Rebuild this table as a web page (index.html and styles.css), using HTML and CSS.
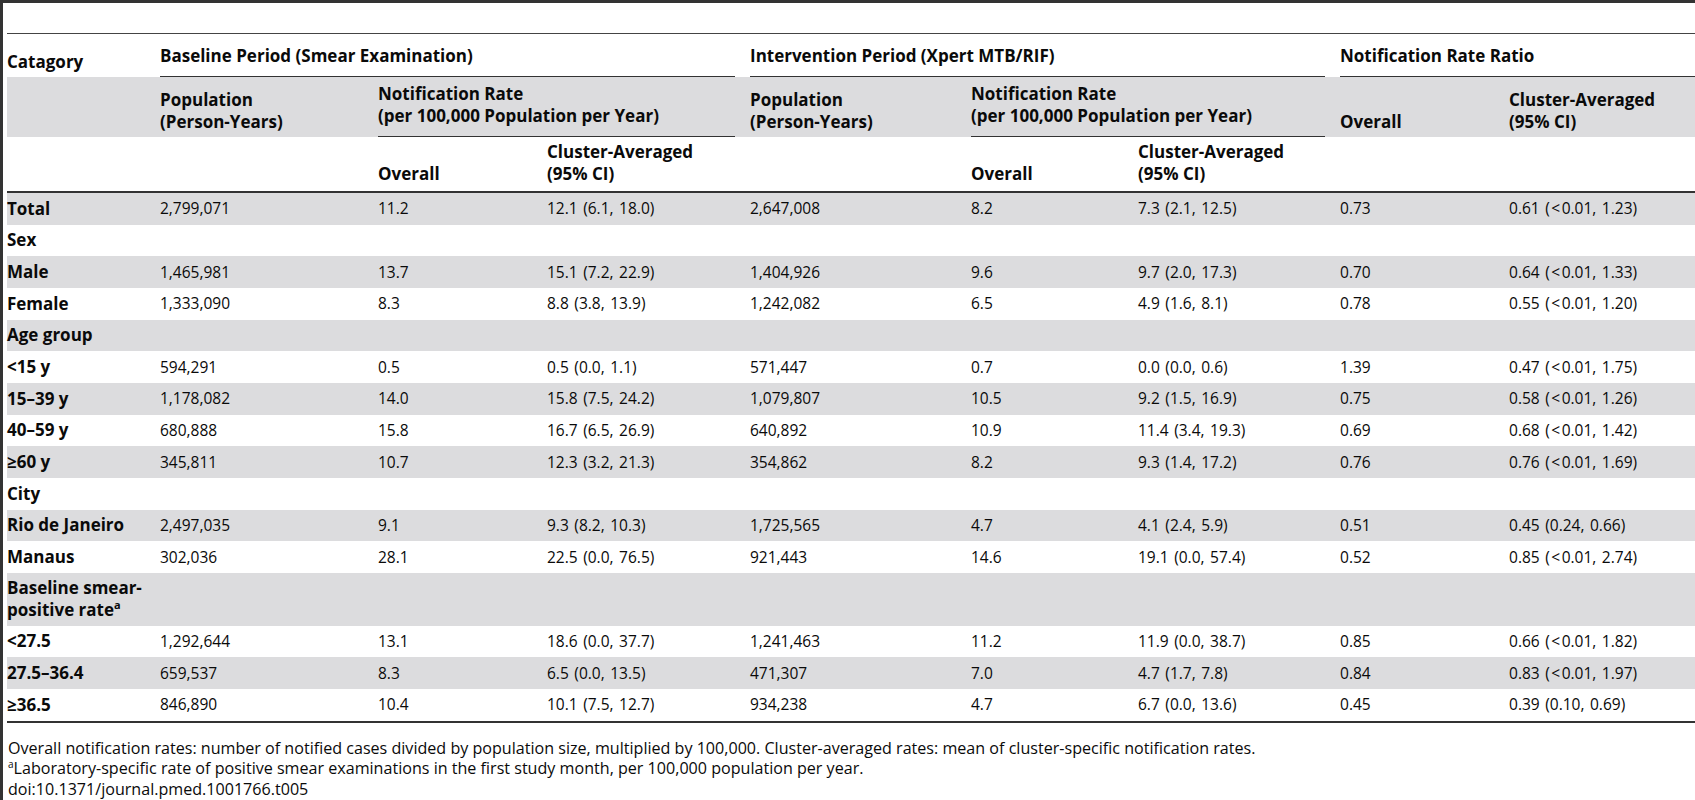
FILE: index.html
```html
<!DOCTYPE html>
<html lang="en">
<head>
<meta charset="utf-8">
<title>Table 5</title>
<link rel="stylesheet" href="styles.css">
</head>
<body>
<div class="page">
<table class="tbl">
  <colgroup>
    <col class="c1"><col class="c2"><col class="c3"><col class="c4"><col class="c5"><col class="c6"><col class="c7"><col class="c8"><col class="c9">
  </colgroup>
  <thead>
    <tr class="h1">
      <th class="cat">Catagory</th>
      <th colspan="3" class="ul gap">Baseline Period (Smear Examination)</th>
      <th colspan="3" class="ul gap">Intervention Period (Xpert MTB/RIF)</th>
      <th colspan="2" class="ul">Notification Rate Ratio</th>
    </tr>
    <tr class="h2">
      <th></th>
      <th class="bot">Population<br>(Person-Years)</th>
      <th colspan="2" class="ul gap nr">Notification Rate<br>(per 100,000 Population per Year)</th>
      <th class="bot">Population<br>(Person-Years)</th>
      <th colspan="2" class="ul gap nr">Notification Rate<br>(per 100,000 Population per Year)</th>
      <th class="bot">Overall</th>
      <th class="bot">Cluster-Averaged<br>(95% CI)</th>
    </tr>
    <tr class="h3">
      <th></th>
      <th></th>
      <th>Overall</th>
      <th>Cluster-Averaged<br>(95% CI)</th>
      <th></th>
      <th>Overall</th>
      <th>Cluster-Averaged<br>(95% CI)</th>
      <th></th>
      <th></th>
    </tr>
  </thead>
  <tbody>
    <tr class="g"><th>Total</th><td>2,799,071</td><td>11.2</td><td>12.1 (6.1, 18.0)</td><td>2,647,008</td><td>8.2</td><td>7.3 (2.1, 12.5)</td><td>0.73</td><td>0.61 (<span class="lt">&lt;</span>0.01, 1.23)</td></tr>
    <tr><th>Sex</th><td></td><td></td><td></td><td></td><td></td><td></td><td></td><td></td></tr>
    <tr class="g"><th>Male</th><td>1,465,981</td><td>13.7</td><td>15.1 (7.2, 22.9)</td><td>1,404,926</td><td>9.6</td><td>9.7 (2.0, 17.3)</td><td>0.70</td><td>0.64 (<span class="lt">&lt;</span>0.01, 1.33)</td></tr>
    <tr><th>Female</th><td>1,333,090</td><td>8.3</td><td>8.8 (3.8, 13.9)</td><td>1,242,082</td><td>6.5</td><td>4.9 (1.6, 8.1)</td><td>0.78</td><td>0.55 (<span class="lt">&lt;</span>0.01, 1.20)</td></tr>
    <tr class="g"><th>Age group</th><td></td><td></td><td></td><td></td><td></td><td></td><td></td><td></td></tr>
    <tr><th>&lt;15 y</th><td>594,291</td><td>0.5</td><td>0.5 (0.0, 1.1)</td><td>571,447</td><td>0.7</td><td>0.0 (0.0, 0.6)</td><td>1.39</td><td>0.47 (<span class="lt">&lt;</span>0.01, 1.75)</td></tr>
    <tr class="g"><th>15–39 y</th><td>1,178,082</td><td>14.0</td><td>15.8 (7.5, 24.2)</td><td>1,079,807</td><td>10.5</td><td>9.2 (1.5, 16.9)</td><td>0.75</td><td>0.58 (<span class="lt">&lt;</span>0.01, 1.26)</td></tr>
    <tr><th>40–59 y</th><td>680,888</td><td>15.8</td><td>16.7 (6.5, 26.9)</td><td>640,892</td><td>10.9</td><td>11.4 (3.4, 19.3)</td><td>0.69</td><td>0.68 (<span class="lt">&lt;</span>0.01, 1.42)</td></tr>
    <tr class="g"><th>≥60 y</th><td>345,811</td><td>10.7</td><td>12.3 (3.2, 21.3)</td><td>354,862</td><td>8.2</td><td>9.3 (1.4, 17.2)</td><td>0.76</td><td>0.76 (<span class="lt">&lt;</span>0.01, 1.69)</td></tr>
    <tr><th>City</th><td></td><td></td><td></td><td></td><td></td><td></td><td></td><td></td></tr>
    <tr class="g"><th>Rio de Janeiro</th><td>2,497,035</td><td>9.1</td><td>9.3 (8.2, 10.3)</td><td>1,725,565</td><td>4.7</td><td>4.1 (2.4, 5.9)</td><td>0.51</td><td>0.45 (0.24, 0.66)</td></tr>
    <tr><th>Manaus</th><td>302,036</td><td>28.1</td><td>22.5 (0.0, 76.5)</td><td>921,443</td><td>14.6</td><td>19.1 (0.0, 57.4)</td><td>0.52</td><td>0.85 (<span class="lt">&lt;</span>0.01, 2.74)</td></tr>
    <tr class="g tall"><th>Baseline smear-<br>positive rate<sup>a</sup></th><td></td><td></td><td></td><td></td><td></td><td></td><td></td><td></td></tr>
    <tr><th>&lt;27.5</th><td>1,292,644</td><td>13.1</td><td>18.6 (0.0, 37.7)</td><td>1,241,463</td><td>11.2</td><td>11.9 (0.0, 38.7)</td><td>0.85</td><td>0.66 (<span class="lt">&lt;</span>0.01, 1.82)</td></tr>
    <tr class="g"><th>27.5–36.4</th><td>659,537</td><td>8.3</td><td>6.5 (0.0, 13.5)</td><td>471,307</td><td>7.0</td><td>4.7 (1.7, 7.8)</td><td>0.84</td><td>0.83 (<span class="lt">&lt;</span>0.01, 1.97)</td></tr>
    <tr><th>≥36.5</th><td>846,890</td><td>10.4</td><td>10.1 (7.5, 12.7)</td><td>934,238</td><td>4.7</td><td>6.7 (0.0, 13.6)</td><td>0.45</td><td>0.39 (0.10, 0.69)</td></tr>
  </tbody>
</table>
<div class="notes">
  <p>Overall notification rates: number of notified cases divided by population size, multiplied by 100,000. Cluster-averaged rates: mean of cluster-specific notification rates.</p>
  <p><sup>a</sup>Laboratory-specific rate of positive smear examinations in the first study month, per 100,000 population per year.</p>
  <p>doi:10.1371/journal.pmed.1001766.t005</p>
</div>
</div>
</body>
</html>
```

FILE: styles.css
```css
html {
  overflow: hidden;
  background: #fff;
}
body {
  margin: 0;
  font-family: "Open Sans", "Noto Sans", sans-serif;
  color: #0a0a0a;
}
.page {
  border-top: 3px solid #333;
  border-left: 3px solid #333;
  padding-left: 4px;
  padding-top: 30px;
  min-height: 800px;
  box-sizing: border-box;
}
.tbl {
  width: 1688px;
  table-layout: fixed;
  border-collapse: separate;
  border-spacing: 0;
  border-top: 1px solid #444;
  border-bottom: 2px solid #333;
}
.c1 { width: 153px; }
.c2 { width: 218px; }
.c3 { width: 169px; }
.c4 { width: 203px; }
.c5 { width: 221px; }
.c6 { width: 167px; }
.c7 { width: 202px; }
.c8 { width: 169px; }
.c9 { width: 186px; }

.tbl th, .tbl td {
  padding: 0;
  text-align: left;
  white-space: nowrap;
}
thead th {
  font-size: 17px;
  font-weight: 700;
  line-height: 21.5px;
}
.ul {
  background-image: linear-gradient(#333, #333);
  background-repeat: no-repeat;
  background-position: left bottom;
  background-size: 100% 1px;
}
.ul.gap {
  background-size: calc(100% - 15px) 1px;
}

.h1 { height: 43px; }
.h1 th { vertical-align: middle; }
.h1 th.cat {
  line-height: 22px;
  vertical-align: bottom;
  padding-bottom: 4px;
}
.h2 { height: 60px; background: #dcdcde; }
.h2 th { vertical-align: bottom; padding-bottom: 5px; }
.h2 th.nr { padding-bottom: 11px; }
.h3 { height: 56px; }
.h3 th {
  vertical-align: bottom;
  padding-bottom: 7px;
  border-bottom: 2px solid #333;
}

tbody tr { height: 31.67px; }
tbody tr.tall { height: 52.67px; }
tbody tr.g { background: #dcdcde; }
tbody th {
  font-size: 17px;
  font-weight: 700;
  line-height: 22px;
  vertical-align: middle;
  padding-top: 1px;
}
tbody td {
  font-size: 15.5px;
  line-height: 21px;
  vertical-align: middle;
  word-spacing: 1.5px;
}
.lt {
  padding: 0 1.5px;
}
sup {
  font-size: 11px;
  line-height: 0;
  vertical-align: 7px;
}

.notes {
  margin-top: 15px;
  font-size: 16.1px;
  line-height: 20.5px;
}
.notes p {
  margin: 0;
  padding-left: 1px;
}
.notes sup {
  font-size: 10px;
  vertical-align: 6px;
}
```
